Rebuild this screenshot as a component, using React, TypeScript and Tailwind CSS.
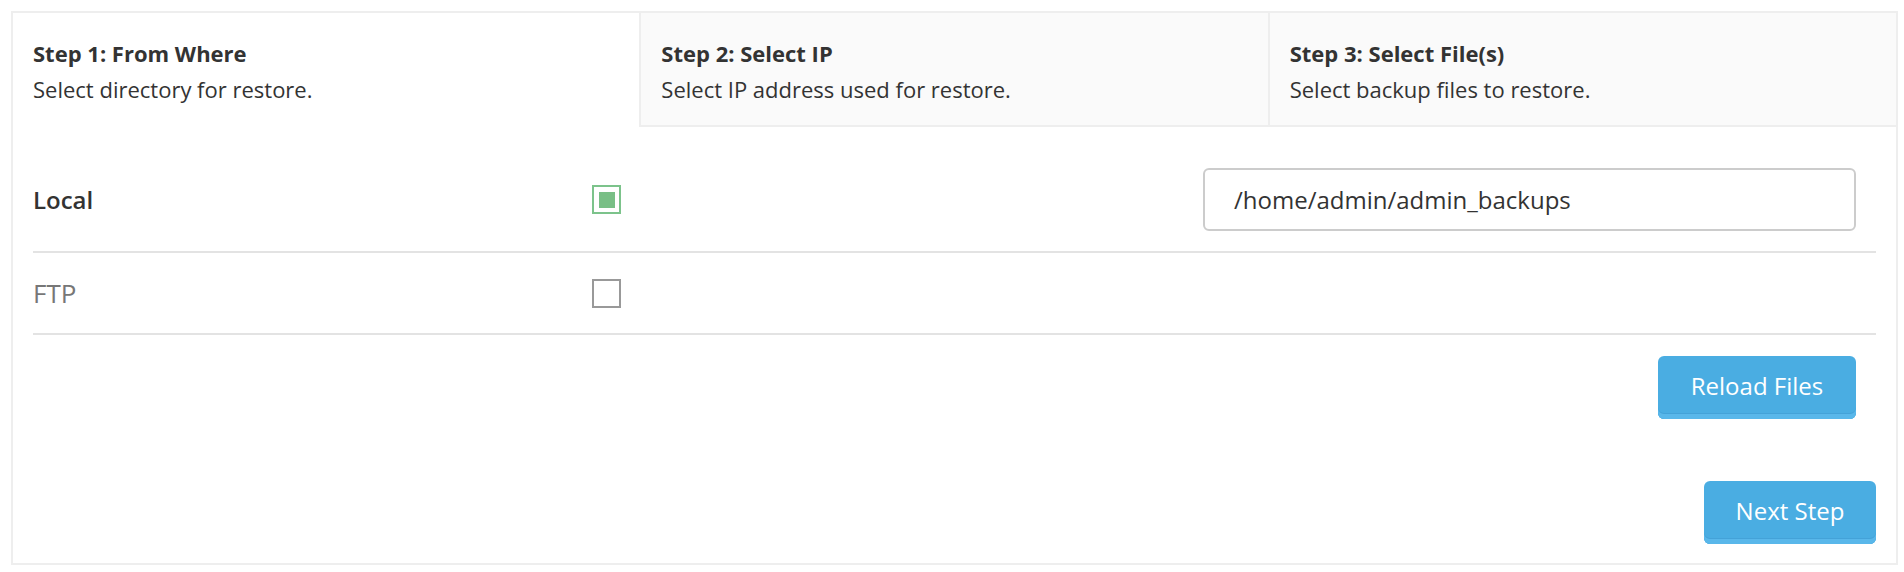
import React from "react";

const Tab = ({ title, sub, active, first }: { title: string; sub: string; active?: boolean; first?: boolean }) => (
  <div
    className={
      "flex-1 h-[114px] pt-[22px] px-[20px] " +
      (active ? "bg-white" : "bg-[#fafafa] border-b-2 border-[#eeeeee]") +
      (first ? "" : " border-l-2 border-l-[#eeeeee]")
    }
  >
    <div className="text-[22px] leading-[36px] font-bold text-[#333333]">{title}</div>
    <div className="text-[22px] leading-[36px] text-[#333333]">{sub}</div>
  </div>
);

const Btn = ({ children, className }: { children: React.ReactNode; className?: string }) => (
  <button
    className={
      "h-[63px] rounded-[6px] bg-[#4aade2] text-white text-[24px] shadow-[inset_0_-5px_0_#59b7ea,inset_0_-6px_0_#44a2d8] pb-[4px] " +
      (className ?? "")
    }
  >
    {children}
  </button>
);

export default function App() {
  return (
    <div className="w-[1904px] h-[572px] bg-white pt-[11px] pl-[11px]" style={{ fontFamily: '"Open Sans", sans-serif' }}>
      <div className="w-[1887px] border-2 border-[#eeeeee] flex flex-col">
        <div className="flex">
          <Tab first active title="Step 1: From Where" sub="Select directory for restore." />
          <Tab title="Step 2: Select IP" sub="Select IP address used for restore." />
          <Tab title="Step 3: Select File(s)" sub="Select backup files to restore." />
        </div>
        <div className="px-[20px] pt-[21px] pb-[19px] flex flex-col">
          <div className="flex items-center py-[20px] border-b-2 border-[#e3e3e3]">
            <div className="w-[559px] text-[24px] font-semibold text-[#333333]">Local</div>
            <div className="w-[29px] h-[29px] border-2 border-[#7cc38b] flex items-center justify-center">
              <div className="w-[16px] h-[16px] bg-[#79bf86]" />
            </div>
            <div className="ml-auto mr-[20px] w-[653px] h-[63px] rounded-[6px] border-2 border-[#cccccc] flex items-center pl-[29px] text-[24px] text-[#333333]">
              /home/admin/admin_backups
            </div>
          </div>
          <div className="flex items-center h-[82px] border-b-2 border-[#e3e3e3]">
            <div className="w-[559px] text-[26px] text-[#777777]">FTP</div>
            <div className="w-[29px] h-[29px] border-2 border-[#999999]" />
          </div>
          <div className="flex justify-end pr-[20px] mt-[21px]">
            <Btn className="w-[198px]">Reload Files</Btn>
          </div>
          <div className="flex justify-end mt-[62px]">
            <Btn className="w-[172px]">Next Step</Btn>
          </div>
        </div>
      </div>
    </div>
  );
}
